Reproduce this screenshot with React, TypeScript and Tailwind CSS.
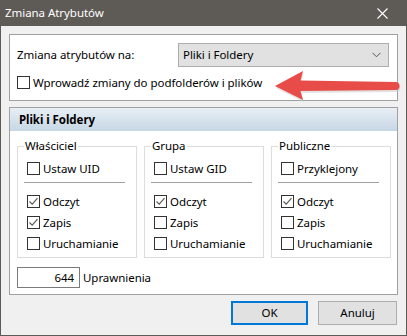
import React from "react"

function Check({ checked = false }: { checked?: boolean }) {
  return (
    <span className="w-[13px] h-[13px] border border-[#333333] bg-white flex items-center justify-center shrink-0">
      {checked && (
        <svg width="11" height="11" viewBox="0 0 11 11">
          <path d="M1.5 5.5 L4.2 8.2 L9.5 2.2" fill="none" stroke="#555555" strokeWidth="1.1" />
        </svg>
      )}
    </span>
  )
}

function CheckRow({ label, checked = false }: { label: string; checked?: boolean }) {
  return (
    <div className="flex items-center gap-[3px] h-[13px]">
      <Check checked={checked} />
      <span className="leading-none">{label}</span>
    </div>
  )
}

function Group({ title, first, items }: { title: string; first: string; items: [string, boolean][] }) {
  return (
    <fieldset className="w-[120px] h-[120px] border border-[#dcdcdc]">
      <legend className="ml-[6px] px-[1px] leading-[16px]">{title}</legend>
      <div className="pl-[9px] pr-[11px]">
        <div className="mt-[8px]">
          <CheckRow label={first} />
        </div>
        <div className="mt-[7px] -ml-[3px] h-px bg-[#a0a0a0]" />
        <div className="mt-[12px] flex flex-col gap-[8px]">
          {items.map(([l, c]) => (
            <CheckRow key={l} label={l} checked={c} />
          ))}
        </div>
      </div>
    </fieldset>
  )
}

export default function App() {
  return (
    <div
      className="w-[407px] h-[336px] flex flex-col bg-[#f0f0f0] border-x border-b border-[#5e5a56] text-[11.5px] tracking-[-0.05px] text-black"
      style={{ fontFamily: '"Noto Sans", "Liberation Sans", sans-serif' }}
    >
      {/* Title bar */}
      <div className="h-[26px] bg-[#5e5a56] flex items-center justify-between pl-[4px] pr-[18px] text-white shrink-0">
        <span>Zmiana Atrybutów</span>
        <svg width="11" height="11" viewBox="0 0 11 11">
          <path d="M0.5 0.5 L10.5 10.5 M10.5 0.5 L0.5 10.5" stroke="#ffffff" strokeWidth="1.1" />
        </svg>
      </div>

      <div className="flex flex-col px-2 pt-2">
        {/* Top box */}
        <div className="relative h-[67px] border border-[#a0a0a0] bg-white pl-[7px] pt-[8px]">
          <div className="flex items-center h-[24px]">
            <span className="w-[161px]">Zmiana atrybutów na:</span>
            <div className="w-[211px] h-[24px] border border-[#adadad] bg-[#e1e1e1] flex items-center justify-between pl-[4px] pr-[7px]">
              <span>Pliki i Foldery</span>
              <svg width="9" height="6" viewBox="0 0 9 6">
                <path d="M0.5 0.8 L4.5 4.8 L8.5 0.8" fill="none" stroke="#555555" strokeWidth="1" />
              </svg>
            </div>
          </div>
          <div className="mt-[9px]">
            <CheckRow label="Wprowadź zmiany do podfolderów i plików" />
          </div>

          {/* Red arrow annotation */}
          <svg className="absolute left-[263px] top-[35px]" width="128" height="32" viewBox="0 0 128 32">
            <path
              d="M2 17 L30 2 L27.5 11.5 L123 13 Q126.5 13.3 126.5 17 Q126.5 20.7 123 21 L27.5 22 L30 31 Z"
              fill="#c7c7c7"
              opacity="0.5"
              transform="translate(0.8 1)"
            />
            <path
              d="M2 16 L30 1 L27.5 10.5 L123 12 Q126.5 12.3 126.5 16 Q126.5 19.7 123 20 L27.5 21 L30 30 Z"
              fill="#e84c48"
            />
          </svg>
        </div>

        {/* Second box */}
        <div className="mt-[6px] h-[188px] border border-[#a0a0a0] bg-white flex flex-col">
          <div className="h-[23px] bg-gradient-to-b from-[#e8eff5] to-[#c6d7e4] flex items-center pl-[9px] font-bold">
            Pliki i Foldery
          </div>
          <div className="flex gap-[7px] pl-[7px] mt-[7px]">
            <Group
              title="Właściciel"
              first="Ustaw UID"
              items={[
                ["Odczyt", true],
                ["Zapis", true],
                ["Uruchamianie", false],
              ]}
            />
            <Group
              title="Grupa"
              first="Ustaw GID"
              items={[
                ["Odczyt", true],
                ["Zapis", false],
                ["Uruchamianie", false],
              ]}
            />
            <Group
              title="Publiczne"
              first="Przyklejony"
              items={[
                ["Odczyt", true],
                ["Zapis", false],
                ["Uruchamianie", false],
              ]}
            />
          </div>
          <div className="flex items-center gap-[3px] pl-[7px] mt-[9px]">
            <div className="w-[63px] h-[21px] border border-[#7a7a7a] bg-white flex items-center justify-end pr-[5px]">
              644
            </div>
            <span>Uprawnienia</span>
          </div>
        </div>

        {/* Buttons */}
        <div className="flex justify-end gap-[10px] mt-[6px] pr-px">
          <button className="w-[77px] h-[24px] border-2 border-[#0078d7] bg-[#e1e1e1]">OK</button>
          <button className="w-[79px] h-[24px] border border-[#adadad] bg-[#e1e1e1]">Anuluj</button>
        </div>
      </div>
    </div>
  )
}
